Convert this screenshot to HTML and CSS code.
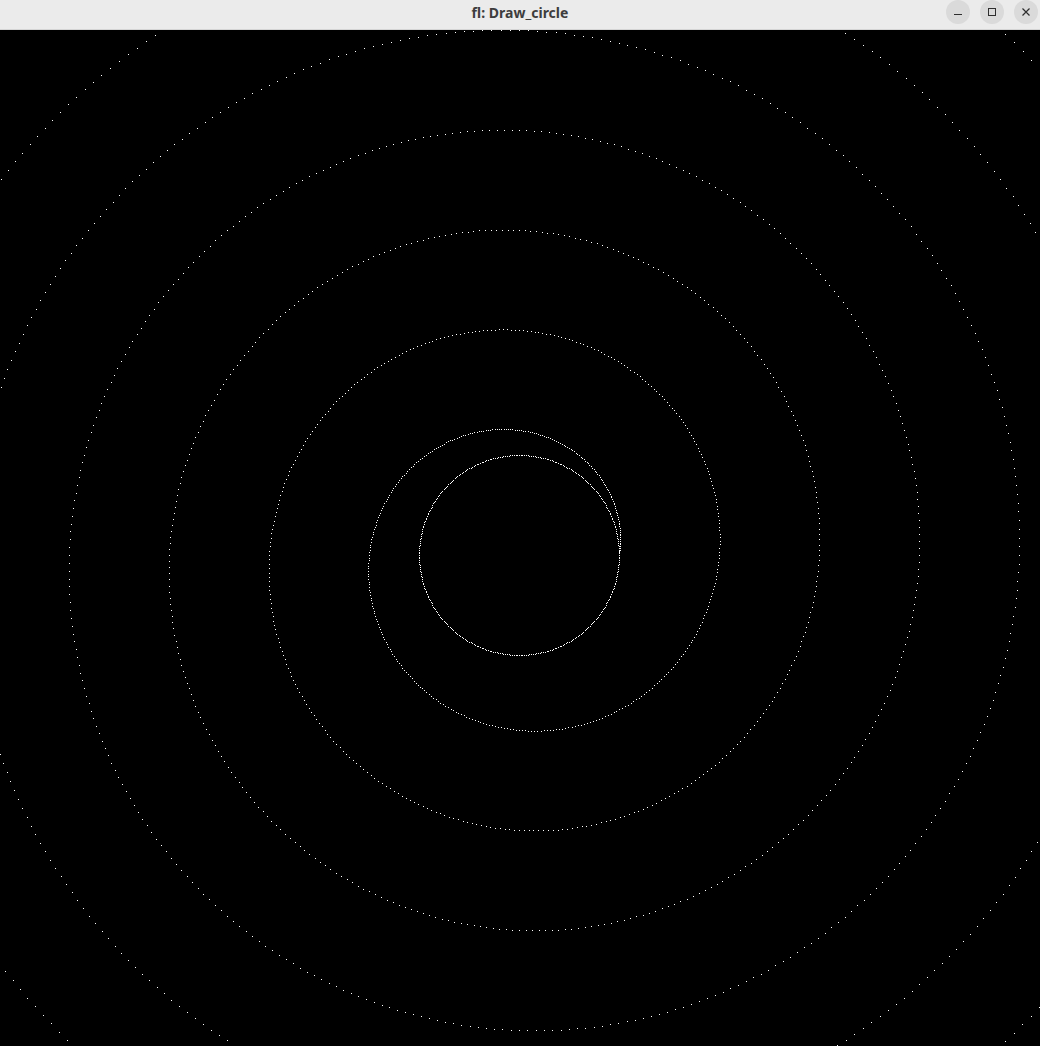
FILE: index.html
```html
<!DOCTYPE html>
<html>
<head>
<meta charset="utf-8">
<title>fl: Draw_circle</title>
<link rel="stylesheet" href="styles.css">
</head>
<body>
<div class="window">
  <header class="titlebar">
    <div class="title">fl: Draw_circle</div>
    <div class="controls">
      <button class="ctl" aria-label="Minimize">
        <svg width="10" height="10" viewBox="0 0 10 10"><rect x="1" y="7" width="8" height="1" fill="#2e2e2e"/></svg>
      </button>
      <button class="ctl" aria-label="Maximize">
        <svg width="10" height="10" viewBox="0 0 10 10"><rect x="1.5" y="1.5" width="7" height="7" fill="none" stroke="#2e2e2e" stroke-width="1"/></svg>
      </button>
      <button class="ctl" aria-label="Close">
        <svg width="10" height="10" viewBox="0 0 10 10"><path d="M1.5 1.5 L8.5 8.5 M8.5 1.5 L1.5 8.5" stroke="#2e2e2e" stroke-width="1.2" fill="none"/></svg>
      </button>
    </div>
  </header>
  <canvas id="view" class="view" width="1040" height="1016"></canvas>
</div>
<script src="script.js"></script>
</body>
</html>
```

FILE: styles.css
```css
html, body {
  margin: 0;
  padding: 0;
  background: #000;
}
.window {
  width: 1040px;
  height: 1046px;
  display: flex;
  flex-direction: column;
  overflow: hidden;
}
.titlebar {
  height: 29px;
  flex: 0 0 29px;
  background: #ebebeb;
  border-bottom: 1px solid #d4d4d4;
  position: relative;
  display: flex;
  align-items: center;
  justify-content: center;
}
.title {
  font-family: "Noto Sans", "DejaVu Sans", sans-serif;
  font-weight: 700;
  font-size: 14px;
  color: #3d3d3d;
  margin-top: -5px;
}
.controls {
  position: absolute;
  right: 2px;
  top: 0;
  display: flex;
  gap: 10px;
}
.ctl {
  width: 24px;
  height: 24px;
  border-radius: 50%;
  border: 0;
  padding: 0;
  background: #dadada;
  display: flex;
  align-items: center;
  justify-content: center;
}
.view {
  display: block;
  background: #000;
}
```

FILE: script.js
```js
(function () {
  var c = document.getElementById('view');
  var ctx = c.getContext('2d');
  ctx.fillStyle = '#000';
  ctx.fillRect(0, 0, c.width, c.height);
  ctx.fillStyle = '#fff';
  var cx = 519, cy = 525;
  function dot(x, y) {
    ctx.fillRect(Math.round(x), Math.round(y), 1, 1);
  }
  // inner circle
  for (var d = 0; d < 360; d++) {
    var a = d * Math.PI / 180;
    dot(cx + 100 * Math.cos(a), cy - 100 * Math.sin(a));
  }
  // spiral growing 100px per turn
  for (var d2 = 0; d2 < 360 * 9; d2++) {
    var a2 = d2 * Math.PI / 180;
    var r = 100 + d2 * 100 / 360;
    dot(cx + r * Math.cos(a2), cy - r * Math.sin(a2));
  }
})();
```
